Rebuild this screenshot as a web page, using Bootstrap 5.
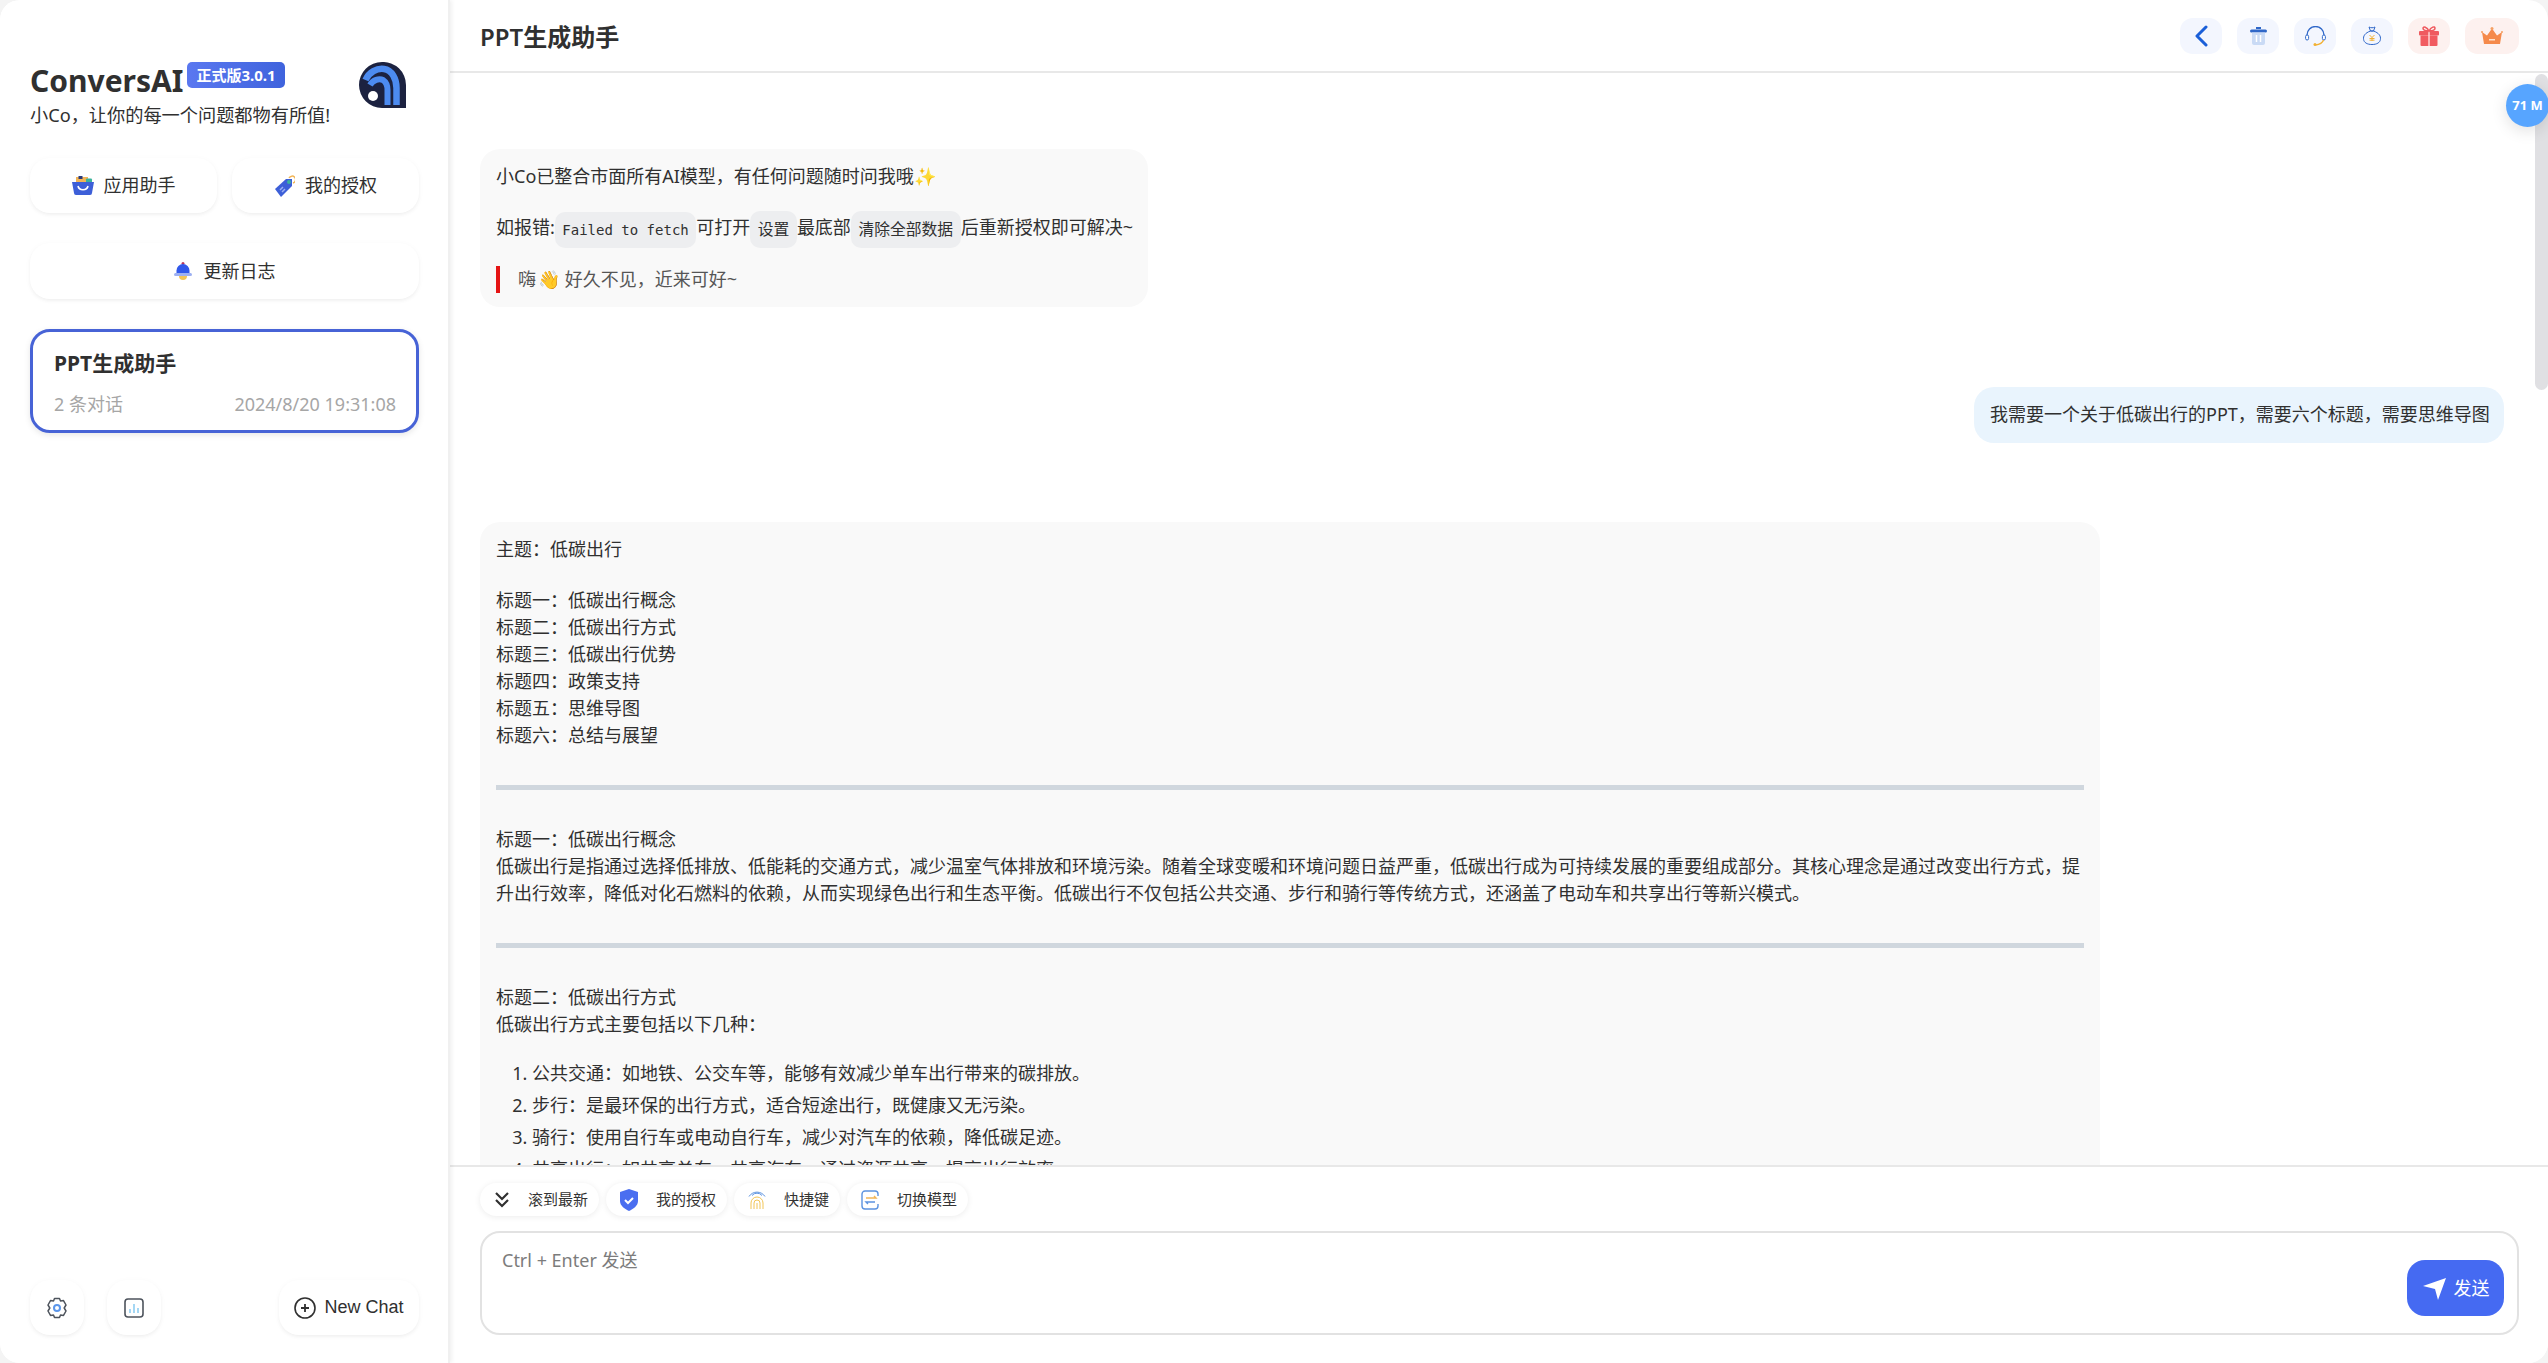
<!DOCTYPE html>
<html lang="zh">
<head>
<meta charset="utf-8">
<title>ConversAI</title>
<link href="https://cdn.jsdelivr.net/npm/bootstrap@5.3.0/dist/css/bootstrap.min.css" rel="stylesheet">
<style>
html,body{height:100%;margin:0;overflow:hidden;background:#f4f4f4}
body{font-family:"Noto Sans","Noto Sans CJK SC",sans-serif;color:#303030;font-size:16px}
.app-shell{height:1363px;width:2548px;background:#fff;border-radius:20px;overflow:hidden}
.side-pane{width:450px;flex:none;background:#fff;padding:66px 29px 28px 30px;box-shadow:2px 0 4px rgba(0,0,0,.06);border-right:2px solid #f0f0f0;z-index:3}
.brand-title{font-size:30px;font-weight:700;line-height:30px;color:#303030;margin:0}
.ver-tag{background:linear-gradient(90deg,#5a78f0,#3f63dd);color:#fff;font-size:15px;font-weight:700;line-height:26px;height:26px;padding:0 9px;border-radius:5px;margin-left:4px;margin-top:-4px;align-self:flex-start}
.brand-sub{font-size:18.2px;line-height:24px;margin-top:7px;color:#303030}
.brand-logo{margin:-4px 13px 0 0}
.tool-btn{background:#fff;border-radius:20px;height:55px;box-shadow:0 2px 4px -1px rgba(0,0,0,.06),0 1px 6px rgba(0,0,0,.03);font-size:18px;color:#303030;gap:10px}
.tool-row{margin-top:31px;gap:15px}
.tool-row .tool-btn{flex:1 1 0}
.tool-full{margin-top:30px;height:56px;gap:12px}
.chat-card{margin-top:30px;height:104px;border:3px solid #4763d6;border-radius:20px;padding:16px 20px 0 21px;box-shadow:0 2px 6px rgba(0,0,0,.1)}
.chat-name{font-size:21px;font-weight:700;line-height:30px;color:#303030}
.chat-meta{color:#a6a6a6;font-size:18px;line-height:26px;margin-top:13px}
.square-btn{width:54px;height:55px;background:#fff;border-radius:20px;box-shadow:0 2px 4px -1px rgba(0,0,0,.06),0 1px 6px rgba(0,0,0,.03)}
.newchat-btn{width:140px;height:55px;background:#fff;border-radius:20px;box-shadow:0 2px 4px -1px rgba(0,0,0,.06),0 1px 6px rgba(0,0,0,.03);font-family:"Liberation Sans",sans-serif;font-size:18px;color:#303030;gap:8px}
.side-foot{gap:23px}
.main-pane{min-width:0;position:relative}
.top-bar{height:73px;flex:none;border-bottom:2px solid #e8e8e8;padding:2px 29px 0 30px}
.top-bar .top-icons{margin-top:-2px}
.top-title{font-size:24px;font-weight:600;color:#303030;margin:0;line-height:30px}
.top-btn{width:42px;height:36px;border-radius:13px;background:#f3f6fe}
.top-btn.warm{background:#fdf1ef}
.top-btn.wide{width:54px}
.top-icons{gap:15px}
.msg-scroll{flex:1;min-height:0;overflow:hidden;padding:76px 44px 0 30px;position:relative}
.bubble{background:#f9f9f9;border-radius:20px;padding:14px 16px;font-size:18px;line-height:27px;color:#303030}
.bubble p{margin:0}
.intro-bubble{width:668px;height:158px}
.intro-bubble p+p{margin-top:24px;white-space:nowrap}
.inline-code{font-family:"DejaVu Sans Mono","Noto Sans CJK SC",monospace;font-size:14px;background:#edeef0;border-radius:10px;padding:10px 7.5px;color:#303030;vertical-align:-1px}
.inline-code.wide-glyph{font-size:15.8px;padding:9px 7.5px}
.intro-bubble blockquote{border-left:4px solid #e51414;padding-left:18px;margin:22px 0 0;color:#555;line-height:27px}
.wave-mark{margin-left:2px}
.user-row{margin-top:80px;justify-content:flex-end}
.user-bubble{background:#e9f4fd;height:56px;width:530px;padding:14px 16px;font-size:18px;line-height:27px;border-radius:20px;white-space:nowrap}
.long-bubble{margin-top:79px;width:1620px;padding:14px 16px 0;height:900px}
.long-bubble hr{border:0;height:5px;background:#d0d7de;opacity:1;margin:36px 0}
.long-bubble .gap-para{margin-top:24px}
.long-bubble ol{margin:22px 0 0;padding-left:36px}
.long-bubble li{margin-top:5px;line-height:27px}
.input-area{height:198px;flex:none;border-top:2px solid #e8e8e8;background:#fff;padding:16px 29px 0 30px;position:relative}
.pill-row{gap:7px}
.act-pill{height:33px;border-radius:17px;background:#fff;box-shadow:0 1px 6px rgba(0,0,0,.08);font-size:15px;padding:0 11px 0 14px;color:#333;gap:18px;line-height:33px}
.entry-box{margin-top:15px;height:104px;border:2px solid #e2e2e2;border-radius:20px;padding:15px 20px 0;position:relative;color:#7c7c7c;font-size:18px;line-height:24px}
.send-btn{position:absolute;right:13px;bottom:17px;width:97px;height:56px;background:#456af2;color:#fff;border:0;border-radius:18px;font-size:18px;gap:8px;padding:0}
.track-bar{position:absolute;right:0;top:1px;width:13px;height:316px;background:#e0e0e3;border-radius:7px}
.token-ball{position:absolute;right:-1px;top:11px;width:43px;height:43px;border-radius:50%;background:#57a5ff;color:#fff;font-size:13px;font-weight:700;box-shadow:0 4px 16px rgba(0,0,0,.12)}
</style>
</head>
<body>
<div class="app-shell d-flex">
  <aside class="side-pane d-flex flex-column">
    <div class="d-flex justify-content-between align-items-start">
      <div>
        <div class="d-flex align-items-start">
          <h1 class="brand-title">ConversAI</h1>
          <span class="ver-tag">正式版3.0.1</span>
        </div>
        <div class="brand-sub">小Co，让你的每一个问题都物有所值!</div>
      </div>
      <svg class="brand-logo" width="47" height="46" viewBox="0 0 47 46"><path d="M23 0a23 23 0 0 0-23 23a23 23 0 0 0 23 23h24V23A23 23 0 0 0 23 0z" fill="#1c2240"/><path d="M6.500 18C10 10 18 6 25 7c8 1 12.500 10 12.500 19v17" fill="none" stroke="#4c8bf0" stroke-width="6.500"/><path d="M11 23c3-5 9-7 13-5 3 2 4.500 6 4.500 10v15" fill="none" stroke="#4c8bf0" stroke-width="6"/><circle cx="14" cy="34" r="5" fill="#fff"/></svg>
    </div>
    <div class="tool-row d-flex">
      <div class="tool-btn d-flex align-items-center justify-content-center"><svg width="22" height="19" viewBox="0 0 22 19"><path d="M4 1h12v7H4z" fill="#f2b557"/><rect x="6.500" y="0" width="4" height="3" fill="#2a3a7a"/><rect x="14" y="2.500" width="6" height="5" rx="1" fill="#3bb39a"/><path d="M0 6h22l-2 11a2 2 0 0 1-2 2H4a2 2 0 0 1-2-2z" fill="#3d5fd8"/><path d="M6 10c1 5 9 5 10 0" fill="none" stroke="#fff" stroke-width="1.600"/></svg><span>应用助手</span></div>
      <div class="tool-btn d-flex align-items-center justify-content-center"><svg width="21" height="22" viewBox="0 0 21 22"><path d="M1 14 12 4h6v7L7 22z" fill="#3d5fd8"/><circle cx="15" cy="7" r="2" fill="#3bb39a"/><path d="M15 3a3.500 3.500 0 1 1 4 5" fill="none" stroke="#f2b557" stroke-width="1.500"/><path d="M6 15l3-3M8 17l3-3" stroke="#9db0f2" stroke-width="1.500"/></svg><span>我的授权</span></div>
    </div>
    <div class="tool-btn tool-full d-flex align-items-center justify-content-center"><svg width="18" height="18" viewBox="0 0 18 18"><circle cx="9" cy="1.500" r="1.500" fill="#b6355c"/><path d="M2.500 11.500V8.500a6.500 6.500 0 0 1 13 0v3z" fill="#3158ea"/><rect x="0" y="11" width="18" height="3" rx="1.500" fill="#9db0f2"/><path d="M5 14h8a4 4 0 0 1-8 0z" fill="#f2c557"/></svg><span>更新日志</span></div>
    <div class="chat-card">
      <div class="chat-name">PPT生成助手</div>
      <div class="chat-meta d-flex justify-content-between"><span>2 条对话</span><span>2024/8/20 19:31:08</span></div>
    </div>
    <div class="side-foot d-flex align-items-center mt-auto">
      <div class="square-btn d-flex align-items-center justify-content-center"><svg width="20" height="22" viewBox="0 0 20 22"><path d="M7.500 1.500h5l1 2.500 3-.4 2.500 4.400-1.800 3 1.800 3-2.500 4.400-3-.4-1 2.500h-5l-1-2.500-3 .4L1 14l1.800-3L1 8l2.500-4.400 3 .4z" fill="none" stroke="#4d535c" stroke-width="1.500" stroke-linejoin="round"/><circle cx="10" cy="11" r="3" fill="none" stroke="#5b96ea" stroke-width="2"/></svg></div>
      <div class="square-btn d-flex align-items-center justify-content-center"><svg width="20" height="20" viewBox="0 0 20 20"><rect x="1" y="1" width="18" height="18" rx="3" fill="none" stroke="#4d535c" stroke-width="1.600"/><path d="M6 11v4M10 6v9M14 10v5" stroke="#8ecdf2" stroke-width="1.600"/></svg></div>
      <div class="newchat-btn d-flex align-items-center justify-content-center ms-auto"><svg width="22" height="22" viewBox="0 0 22 22"><circle cx="11" cy="11" r="10" fill="none" stroke="#303030" stroke-width="1.600"/><path d="M11 7v8M7 11h8" stroke="#303030" stroke-width="1.800"/></svg><span>New Chat</span></div>
    </div>
  </aside>
  <main class="main-pane d-flex flex-column flex-fill">
    <header class="top-bar d-flex align-items-center justify-content-between">
      <h2 class="top-title">PPT生成助手</h2>
      <div class="top-icons d-flex">
        <div class="top-btn d-flex align-items-center justify-content-center"><svg width="14" height="22" viewBox="0 0 14 22"><path d="M12 2 3 11l9 9" fill="none" stroke="#1a5fd8" stroke-width="3" stroke-linecap="round" stroke-linejoin="round"/></svg></div>
        <div class="top-btn d-flex align-items-center justify-content-center"><svg width="17" height="18" viewBox="0 0 17 18"><path d="M6 1h5" stroke="#2f67c8" stroke-width="2"/><rect x="0" y="2.500" width="17" height="3" rx="1.500" fill="#2f67c8"/><path d="M2 5.500h13V16a2 2 0 0 1-2 2H4a2 2 0 0 1-2-2z" fill="#c9daf5"/><path d="M6.500 8v7M10.500 8v7" stroke="#fff" stroke-width="1.500"/></svg></div>
        <div class="top-btn d-flex align-items-center justify-content-center"><svg width="21" height="20" viewBox="0 0 21 20"><path d="M2 9a8.500 8.500 0 0 1 17 0" fill="none" stroke="#2f67c8" stroke-width="1.300"/><rect x=".6" y="9" width="3" height="5" rx="1.500" fill="#fff" stroke="#2f67c8"/><rect x="17.400" y="9" width="3" height="5" rx="1.500" fill="#fff" stroke="#2f67c8"/><path d="M18.500 14c-1 3-4 4.500-8 5" fill="none" stroke="#f2b134" stroke-width="1.400"/><circle cx="10" cy="18.500" r="1.500" fill="#f2b134"/></svg></div>
        <div class="top-btn d-flex align-items-center justify-content-center"><svg width="18" height="19" viewBox="0 0 18 19"><path d="M6 1c2 1 4 1 6 0l-1.500 4h-3z" fill="none" stroke="#2f67c8" stroke-width="1"/><path d="M7.500 5C2 7 0 10 .6 13.500 1 16.500 4 18.500 9 18.500s8-2 8.400-5C18 10 16 7 10.500 5z" fill="none" stroke="#2f67c8" stroke-width="1"/><path d="M6.500 9 9 11.500 11.500 9M9 11.500V15M6.500 12.500h5M6.500 14.200h5" fill="none" stroke="#f2b134" stroke-width="1"/></svg></div>
        <div class="top-btn warm d-flex align-items-center justify-content-center"><svg width="20" height="20" viewBox="0 0 20 20"><rect x="0" y="5" width="20" height="4.500" rx="1" fill="#ef5a5f"/><rect x="1.500" y="9.500" width="17" height="10.500" rx="1" fill="#f15b60"/><rect x="9.300" y="5" width="1.400" height="15" fill="#fdd"/><path d="M10 5C8 1 4 0 4 2.300S8 5 10 5c2 0 6 0 6-2.700S12 1 10 5z" fill="none" stroke="#ef5a5f" stroke-width="1.500"/></svg></div>
        <div class="top-btn warm wide d-flex align-items-center justify-content-center"><svg width="22" height="17" viewBox="0 0 22 17"><path d="M1 5l5 3.500 5-7 5 7 5-3.500-2 12H3z" fill="#f58a4b"/><circle cx="11" cy="1.500" r="1.500" fill="#f5a063"/><circle cx="1" cy="5" r="1" fill="#f5a063"/><circle cx="21" cy="5" r="1" fill="#f5a063"/><rect x="8" y="12" width="6" height="1.500" fill="#fde3cf"/></svg></div>
      </div>
    </header>
    <section class="msg-scroll">
      <div class="track-bar"></div>
      <div class="token-ball d-flex align-items-center justify-content-center">71 M</div>
      <div class="bubble intro-bubble">
        <p>小Co已整合市面所有AI模型，有任何问题随时问我哦✨</p>
        <p>如报错:<code class="inline-code">Failed to fetch</code>可打开<code class="inline-code wide-glyph">设置</code>最底部<code class="inline-code wide-glyph">清除全部数据</code>后重新授权即可解决~</p>
        <blockquote>嗨<span class="wave-mark">👋</span> 好久不见，近来可好~</blockquote>
      </div>
      <div class="user-row d-flex">
        <div class="user-bubble">我需要一个关于低碳出行的PPT，需要六个标题，需要思维导图</div>
      </div>
      <div class="bubble long-bubble">
        <p>主题：低碳出行</p>
        <p class="gap-para">标题一：低碳出行概念<br>标题二：低碳出行方式<br>标题三：低碳出行优势<br>标题四：政策支持<br>标题五：思维导图<br>标题六：总结与展望</p>
        <hr>
        <p>标题一：低碳出行概念<br>低碳出行是指通过选择低排放、低能耗的交通方式，减少温室气体排放和环境污染。随着全球变暖和环境问题日益严重，低碳出行成为可持续发展的重要组成部分。其核心理念是通过改变出行方式，提升出行效率，降低对化石燃料的依赖，从而实现绿色出行和生态平衡。低碳出行不仅包括公共交通、步行和骑行等传统方式，还涵盖了电动车和共享出行等新兴模式。</p>
        <hr>
        <p>标题二：低碳出行方式<br>低碳出行方式主要包括以下几种：</p>
        <ol>
          <li>公共交通：如地铁、公交车等，能够有效减少单车出行带来的碳排放。</li>
          <li>步行：是最环保的出行方式，适合短途出行，既健康又无污染。</li>
          <li>骑行：使用自行车或电动自行车，减少对汽车的依赖，降低碳足迹。</li>
          <li>共享出行：如共享单车、共享汽车，通过资源共享，提高出行效率。</li>
        </ol>
      </div>
    </section>
    <footer class="input-area">
      <div class="pill-row d-flex">
        <div class="act-pill d-flex align-items-center"><svg width="16" height="16" viewBox="0 0 16 16"><path d="M2 1l6 6 6-6M2 8l6 6 6-6" fill="none" stroke="#303030" stroke-width="2.200"/></svg><span>滚到最新</span></div>
        <div class="act-pill d-flex align-items-center"><svg width="18" height="22" viewBox="0 0 18 22"><path d="M9 0l9 3v9c0 5-5 8-9 10-4-2-9-5-9-10V3z" fill="#4a6ef0"/><path d="M5 11l3 3 5-5" fill="none" stroke="#fff" stroke-width="2"/></svg><span>我的授权</span></div>
        <div class="act-pill d-flex align-items-center"><svg width="18" height="20" viewBox="0 0 18 20"><path d="M1 6.500a9.500 9.500 0 0 1 16 0M4 5.500a6.500 6.500 0 0 1 10 0" fill="none" stroke="#5c93e0" stroke-width="1"/><path d="M3 19v-6a6 6 0 0 1 12 0v6M6 19v-6a3 3 0 0 1 6 0v6M9 19v-6" fill="none" stroke="#f2c557" stroke-width="1"/></svg><span>快捷键</span></div>
        <div class="act-pill d-flex align-items-center"><svg width="18" height="20" viewBox="0 0 18 20"><path d="M17 6V4a3 3 0 0 0-3-3H4a3 3 0 0 0-3 3v12a3 3 0 0 0 3 3h10a3 3 0 0 0 3-3v-2" fill="none" stroke="#5c93e0" stroke-width="1.400"/><path d="M5 8h10l-2-2" fill="none" stroke="#f2b557" stroke-width="1.400"/><path d="M14 12H5l2 2" fill="none" stroke="#5c93e0" stroke-width="1.400"/></svg><span>切换模型</span></div>
      </div>
      <div class="entry-box">
        Ctrl + Enter 发送
        <button type="button" class="send-btn btn d-flex align-items-center justify-content-center"><svg width="24" height="24" viewBox="0 0 24 24"><path d="M1 10 24 2l-8 22-3-11z" fill="#fff"/></svg><span>发送</span></button>
      </div>
    </footer>
  </main>
</div>
<script src="https://cdn.jsdelivr.net/npm/bootstrap@5.3.0/dist/js/bootstrap.bundle.min.js"></script>
</body>
</html>
